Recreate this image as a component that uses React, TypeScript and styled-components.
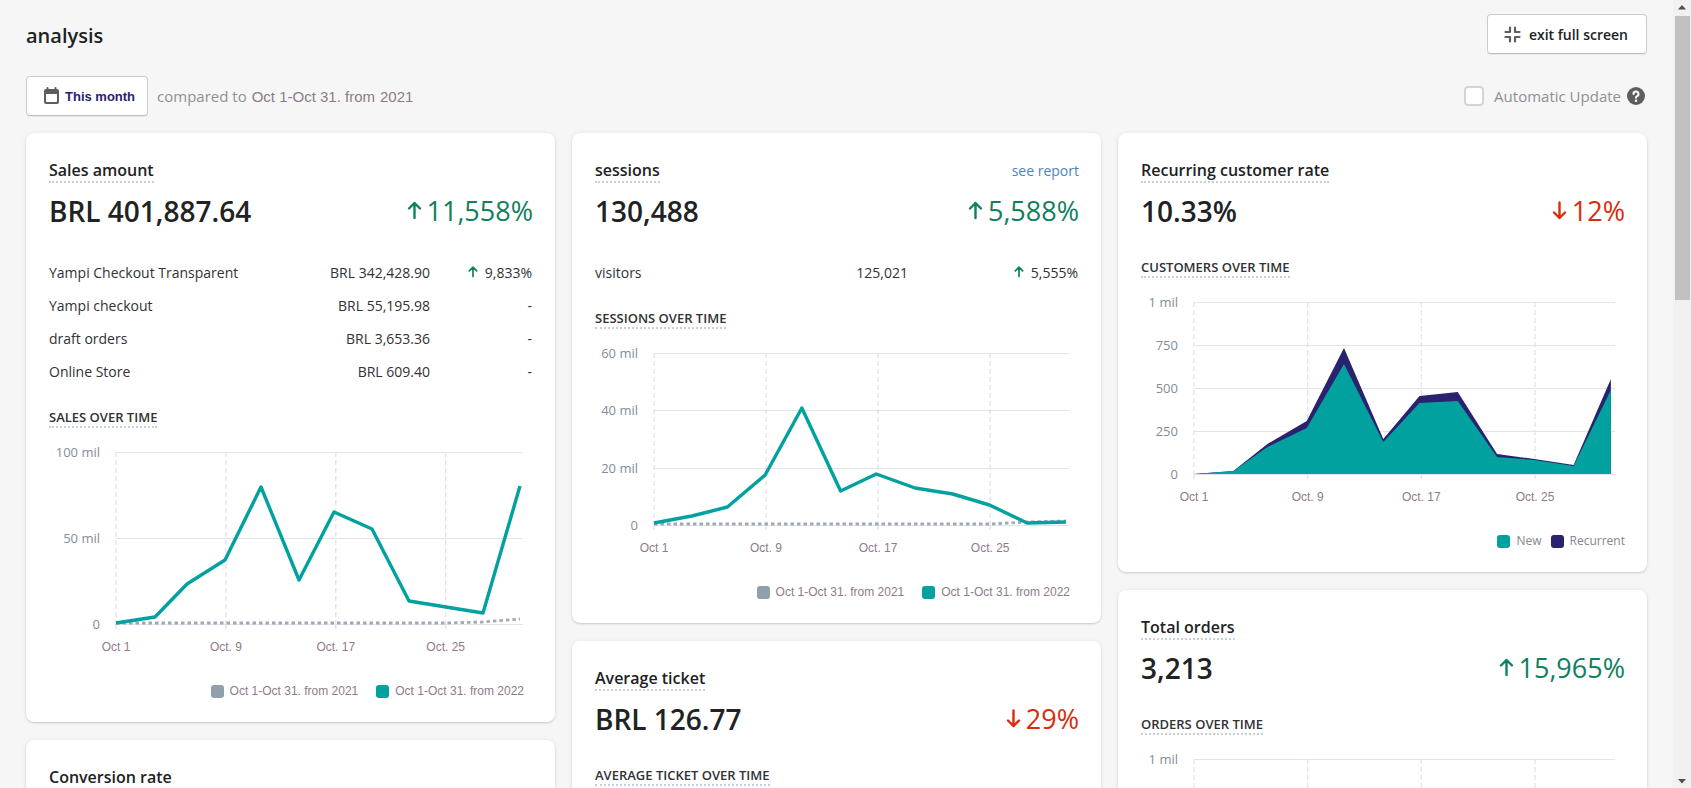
import React from "react";
import styled, { createGlobalStyle } from "styled-components";

const sans = `"Open Sans", "Noto Sans", sans-serif`;
const arial = `"Liberation Sans", Arial, sans-serif`;

const color = {
  page: "#f6f6f7",
  text: "#202223",
  muted: "#8c9196",
  axis: "#7f8d99",
  mauve: "#8f7a8a",
  grid: "#e1e4ea",
  teal: "#00a19f",
  slate: "#919eab",
  navy: "#29226f",
  up: "#108060",
  down: "#d82c0d",
  icon: "#5c5f62",
};

const GlobalStyle = createGlobalStyle`
  *, *::before, *::after { box-sizing: border-box; }
  body {
    margin: 0;
    background: ${color.page};
    color: ${color.text};
    font-family: ${sans};
    font-size: 15px;
  }
`;

/* ---------- page frame ---------- */

const Shell = styled.div`
  display: flex;
  height: 100vh;
`;

const Main = styled.main`
  flex: 1;
  min-width: 0;
  padding: 14px 26px 26px;
  overflow-y: auto;
  scrollbar-width: none;
`;

const ScrollTrack = styled.div`
  display: flex;
  flex-direction: column;
  align-items: center;
  width: 18px;
  background: #f1f1f1;
`;

const ScrollThumb = styled.div`
  flex: 0 0 36%;
  width: 15px;
  background: #c1c1c1;
`;

const ScrollArrow = styled.svg`
  display: block;
  flex: none;
  width: 18px;
  height: 16px;
  fill: #505050;
`;

const ScrollFill = styled.div`
  flex: 1;
`;

const TopBar = styled.header`
  display: flex;
  align-items: center;
  justify-content: space-between;
  height: 40px;
`;

const PageTitle = styled.h1`
  margin: 0;
  padding-top: 4px;
  font-size: 20px;
  line-height: 28px;
  font-weight: 600;
`;

const OutlineButton = styled.button<{ $navy?: boolean }>`
  display: inline-flex;
  align-items: center;
  gap: ${(p) => (p.$navy ? 5 : 8)}px;
  height: 40px;
  padding: 0 ${(p) => (p.$navy ? 12 : 18)}px 0 16px;
  border: 1px solid #c9cccf;
  border-bottom-color: #babfc3;
  border-radius: 4px;
  background: #fff;
  box-shadow: 0 1px 0 rgba(0, 0, 0, 0.05);
  color: ${(p) => (p.$navy ? color.navy : color.text)};
  font-family: ${(p) => (p.$navy ? arial : sans)};
  font-size: ${(p) => (p.$navy ? 13 : 14)}px;
  font-weight: ${(p) => (p.$navy ? 700 : 600)};
  white-space: nowrap;
`;

const FilterBar = styled.div`
  display: flex;
  align-items: center;
  justify-content: space-between;
  margin-top: 22px;
  margin-bottom: 17px;
`;

const FilterGroup = styled.div<{ $gap: number }>`
  display: flex;
  align-items: center;
  gap: ${(p) => p.$gap}px;
`;

const Comparison = styled.div`
  display: flex;
  align-items: baseline;
  gap: 5px;
  color: ${color.muted};
  font-size: 15px;
`;

const DateText = styled.span`
  color: ${color.mauve};
  font-family: ${arial};
  font-size: 15px;
`;

const CheckLabel = styled.label`
  display: flex;
  align-items: center;
  gap: 10px;
  color: ${color.muted};
  font-size: 15px;
`;

const CheckBox = styled.input`
  appearance: none;
  width: 20px;
  height: 20px;
  margin: 0;
  border: 2px solid #d2d5d8;
  border-radius: 4px;
  background: #fff;
`;

const HelpButton = styled.button`
  display: flex;
  padding: 0;
  margin-right: 2px;
  border: 0;
  background: none;
`;

/* ---------- cards ---------- */

const Columns = styled.div`
  display: grid;
  grid-template-columns: repeat(3, minmax(0, 1fr));
  gap: 17px;
  align-items: start;
`;

const Column = styled.div`
  display: flex;
  flex-direction: column;
  gap: 18px;
`;

const CardBox = styled.section`
  padding: 26px 22px 21px 23px;
  border-radius: 8px;
  background: #fff;
  box-shadow: 0 0 5px rgba(23, 24, 24, 0.06), 0 1px 2px rgba(0, 0, 0, 0.16);
`;

const CardHeader = styled.div`
  display: flex;
  justify-content: space-between;
  align-items: flex-start;
`;

const CardTitle = styled.h2`
  margin: 0;
  border-bottom: 2px dotted #c9cfd8;
  font-size: 16px;
  line-height: 22px;
  font-weight: 600;
`;

const ReportLink = styled.a`
  color: #4a86bd;
  font-size: 14px;
  line-height: 24px;
  text-decoration: none;
`;

const Summary = styled.div`
  display: flex;
  justify-content: space-between;
  align-items: center;
  margin-top: 8px;
  line-height: 40px;
`;

const Amount = styled.span`
  font-size: 28px;
  font-weight: 600;
`;

const Delta = styled.span<{ $down?: boolean }>`
  display: flex;
  align-items: center;
  gap: 5px;
  font-size: 27px;
  color: ${(p) => (p.$down ? color.down : color.up)};
`;

const Breakdown = styled.table`
  width: 100%;
  margin-top: 25px;
  margin-bottom: -7px;
  border-collapse: collapse;
  font-size: 14px;
  color: #303234;
`;

const RowName = styled.th`
  height: 33px;
  padding: 0;
  text-align: left;
  font-weight: 400;
`;

const RowValue = styled.td`
  padding: 0;
  text-align: right;
`;

const RowDelta = styled.td<{ $width: number }>`
  width: ${(p) => p.$width}px;
  padding: 0 1px 0 0;
  text-align: right;
`;

const SmallArrow = styled.svg`
  width: 10px;
  height: 12px;
  margin-right: 7px;
  color: ${color.up};
`;

const SubTitle = styled.h3`
  width: fit-content;
  margin: 27px 0 0;
  border-bottom: 2px dotted #c9cfd8;
  font-size: 13px;
  line-height: 18px;
  font-weight: 600;
  text-transform: uppercase;
  color: #303234;
`;

/* ---------- charts ---------- */

const ChartBox = styled.div<{ $axis: number }>`
  display: grid;
  grid-template-columns: ${(p) => p.$axis}px minmax(0, 1fr);
  column-gap: 16px;
  margin-top: 24px;
  padding-right: 10px;
`;

const YLabels = styled.div`
  display: flex;
  flex-direction: column;
  justify-content: space-between;
  height: 192px;
  margin-top: -10px;
  color: ${color.axis};
  font-size: 13px;
  line-height: 20px;
  text-align: right;
  white-space: nowrap;
`;

const PlotSvg = styled.svg`
  display: block;
  width: 100%;
  height: 229px;
  overflow: visible;
`;

const XLabel = styled.text`
  fill: ${color.mauve};
  font-family: ${arial};
  font-size: 12px;
  text-anchor: middle;
`;

const LegendRow = styled.div<{ $wide?: boolean }>`
  display: flex;
  justify-content: flex-end;
  gap: ${(p) => (p.$wide ? 18 : 9)}px;
  padding-right: ${(p) => (p.$wide ? 9 : 0)}px;
  color: ${(p) => (p.$wide ? color.mauve : "#7f8690")};
  font-family: ${(p) => (p.$wide ? arial : sans)};
  font-size: 12px;
  line-height: 20px;
`;

const LegendItem = styled.span`
  display: flex;
  align-items: center;
  gap: 6px;
`;

const Swatch = styled.span<{ $fill: string }>`
  width: 13px;
  height: 13px;
  border-radius: 3px;
  background: ${(p) => p.$fill};
`;

type Point = [number, number];

const PLOT_W = 407;
const PLOT_H = 172;
const toPoints = (pts: Point[]) => pts.map((p) => p.join(",")).join(" ");
const areaPoints = (pts: Point[]) =>
  `0,${PLOT_H} ${toPoints(pts)} ${pts[pts.length - 1][0]},${PLOT_H}`;

const xTicks = [
  { label: "Oct 1", at: "0%" },
  { label: "Oct. 9", at: "27%" },
  { label: "Oct. 17", at: "54%" },
  { label: "Oct. 25", at: "81%" },
];

interface ChartProps {
  yLabels: string[];
  axis: number;
  current?: Point[];
  previous?: Point[];
  areas?: { fill: string; points: Point[] }[];
}

function Chart({ yLabels, axis, current, previous, areas }: ChartProps) {
  const steps = yLabels.length - 1;
  return (
    <ChartBox $axis={axis}>
      <YLabels>
        {yLabels.map((l) => (
          <span key={l}>{l}</span>
        ))}
      </YLabels>
      <PlotSvg role="img" aria-label="Chart">
        {yLabels.map((l, i) => {
          const y = Math.round((PLOT_H / steps) * i);
          return <rect key={l} x="0" y={y} width="100%" height="1" fill={color.grid} />;
        })}
        {xTicks.map((t) => (
          <React.Fragment key={t.label}>
            <line x1={t.at} x2={t.at} y1="0" y2={PLOT_H} stroke={color.grid} strokeWidth="1.3" strokeDasharray="5 3" />
            <line x1={t.at} x2={t.at} y1={PLOT_H} y2={PLOT_H + 5} stroke={color.grid} strokeWidth="1.5" />
            <XLabel x={t.at} y={PLOT_H + 27}>
              {t.label}
            </XLabel>
          </React.Fragment>
        ))}
        <svg
          width="100%"
          height={PLOT_H}
          viewBox={`0 0 ${PLOT_W} ${PLOT_H}`}
          preserveAspectRatio="none"
          overflow="visible"
        >
          {areas?.map((a) => (
            <polygon key={a.fill} points={areaPoints(a.points)} fill={a.fill} />
          ))}
          {previous && (
            <polyline
              points={toPoints(previous)}
              fill="none"
              stroke="#a0a9b8"
              strokeWidth="2.8"
              strokeDasharray="3.500 3"
              vectorEffect="non-scaling-stroke"
            />
          )}
          {current && (
            <polyline
              points={toPoints(current)}
              fill="none"
              stroke={color.teal}
              strokeWidth="3.400"
              strokeLinejoin="round"
              vectorEffect="non-scaling-stroke"
            />
          )}
        </svg>
      </PlotSvg>
    </ChartBox>
  );
}

function PeriodLegend() {
  return (
    <LegendRow $wide>
      <LegendItem>
        <Swatch $fill={color.slate} />
        Oct 1-Oct 31. from 2021
      </LegendItem>
      <LegendItem>
        <Swatch $fill={color.teal} />
        Oct 1-Oct 31. from 2022
      </LegendItem>
    </LegendRow>
  );
}

function DeltaArrow({ down }: { down?: boolean }) {
  return (
    <svg width="15" height="20" viewBox="0 0 15 20" fill="none" stroke="currentColor" strokeWidth="2.4" strokeLinecap="round" strokeLinejoin="round" aria-hidden="true">
      <path d={down ? "M7.500 1.500V17M2 11.500l5.500 5.500 5.500-5.500" : "M7.500 17V2M2 7.500l5.500-5.500 5.500 5.500"} />
    </svg>
  );
}

interface MetricCardProps {
  title: string;
  amount: string;
  delta: string;
  down?: boolean;
  report?: boolean;
  rows?: [string, string, string][];
  deltaWidth?: number;
  subtitle: string;
  children?: React.ReactNode;
}

function MetricCard({ title, amount, delta, down, report, rows, deltaWidth = 103, subtitle, children }: MetricCardProps) {
  return (
    <CardBox>
      <CardHeader>
        <CardTitle>{title}</CardTitle>
        {report && <ReportLink href="#report">see report</ReportLink>}
      </CardHeader>
      <Summary>
        <Amount>{amount}</Amount>
        <Delta $down={down}>
          <DeltaArrow down={down} />
          {delta}
        </Delta>
      </Summary>
      {rows && (
        <Breakdown>
          <tbody>
            {rows.map(([name, value, change]) => (
              <tr key={name}>
                <RowName scope="row">{name}</RowName>
                <RowValue>{value}</RowValue>
                <RowDelta $width={deltaWidth}>
                  {change !== "-" && (
                    <SmallArrow viewBox="0 0 10 12" fill="none" stroke="currentColor" strokeWidth="1.700" strokeLinecap="round" strokeLinejoin="round" aria-hidden="true">
                      <path d="M5 10.500V1.200M1.300 4.800L5 1.200l3.700 3.600" />
                    </SmallArrow>
                  )}
                  {change}
                </RowDelta>
              </tr>
            ))}
          </tbody>
        </Breakdown>
      )}
      <SubTitle>{subtitle}</SubTitle>
      {children}
    </CardBox>
  );
}

/* ---------- chart data, in plot units ---------- */

const salesNow: Point[] = [[0, 171], [39, 165], [71, 132], [109, 108], [145, 35], [183, 128], [218, 60], [256, 77], [293, 149], [330, 155], [367, 161], [404, 34]];
const salesBefore: Point[] = [[0, 171], [330, 171], [367, 170], [404, 167]];
const sessionsNow: Point[] = [[0, 170], [37, 163], [72, 154], [109, 122], [145, 55], [183, 138], [218, 121], [256, 135], [293, 141], [329, 152], [366, 170], [404, 169]];
const sessionsBefore: Point[] = [[0, 171], [329, 171], [366, 169], [404, 168]];
const newCustomers: Point[] = [[0, 172], [38, 169], [71, 145], [109, 126], [145, 62], [183, 140], [218, 101], [255, 99], [293, 155], [329, 158], [367, 164], [403, 88]];
const allCustomers: Point[] = [[0, 172], [38, 169], [71, 142], [109, 119], [145, 46], [183, 137], [218, 94], [255, 90], [293, 152], [329, 157], [367, 163], [403, 77]];

export default function App() {
  return (
    <>
      <GlobalStyle />
      <Shell>
        <Main>
          <TopBar>
            <PageTitle>analysis</PageTitle>
            <OutlineButton type="button">
              <svg width="17" height="17" viewBox="0 0 17 17" fill="none" stroke={color.icon} strokeWidth="2.200" strokeLinecap="round" strokeLinejoin="round" aria-hidden="true">
                <path d="M1.500 6H6V1.500M11 1.500V6h4.500M1.500 11H6v4.500M11 15.500V11h4.500" />
              </svg>
              exit full screen
            </OutlineButton>
          </TopBar>
          <FilterBar>
            <FilterGroup $gap={9}>
              <OutlineButton type="button" $navy>
                <svg width="17" height="18" viewBox="0 0 17 18" aria-hidden="true">
                  <path
                    fill={color.icon}
                    fillRule="evenodd"
                    d="M4.500 0a1 1 0 0 1 1 1v1h6V1a1 1 0 1 1 2 0v1H14a2 2 0 0 1 2 2v11a2 2 0 0 1-2 2H3a2 2 0 0 1-2-2V4a2 2 0 0 1 2-2h.5V1a1 1 0 0 1 1-1zM3 7v7a1 1 0 0 0 1 1h9a1 1 0 0 0 1-1V7z"
                  />
                </svg>
                This month
              </OutlineButton>
              <Comparison>
                compared to <DateText>Oct 1-Oct 31. from</DateText> <DateText>2021</DateText>
              </Comparison>
            </FilterGroup>
            <FilterGroup $gap={6}>
              <CheckLabel>
                <CheckBox type="checkbox" />
                Automatic Update
              </CheckLabel>
              <HelpButton type="button" aria-label="Help">
                <svg width="18" height="18" viewBox="0 0 18 18" aria-hidden="true">
                  <circle cx="9" cy="9" r="9" fill={color.icon} />
                  <path d="M6.500 7a2.500 2.500 0 1 1 3.700 2.200c-.8.400-1.200.8-1.200 1.500" fill="none" stroke="#fff" strokeWidth="2" strokeLinecap="round" />
                  <circle cx="9" cy="13.700" r="1.200" fill="#fff" />
                </svg>
              </HelpButton>
            </FilterGroup>
          </FilterBar>
          <Columns>
            <Column>
              <MetricCard
                title="Sales amount"
                amount="BRL 401,887.64"
                delta="11,558%"
                subtitle="Sales over time"
                rows={[
                  ["Yampi Checkout Transparent", "BRL 342,428.90", "9,833%"],
                  ["Yampi checkout", "BRL 55,195.98", "-"],
                  ["draft orders", "BRL 3,653.36", "-"],
                  ["Online Store", "BRL 609.40", "-"],
                ]}
              >
                <Chart axis={51} yLabels={["100 mil", "50 mil", "0"]} current={salesNow} previous={salesBefore} />
                <PeriodLegend />
              </MetricCard>
              <CardBox>
                <CardHeader>
                  <CardTitle>Conversion rate</CardTitle>
                </CardHeader>
              </CardBox>
            </Column>
            <Column>
              <MetricCard
                title="sessions"
                amount="130,488"
                delta="5,588%"
                report
                subtitle="Sessions over time"
                deltaWidth={171}
                rows={[["visitors", "125,021", "5,555%"]]}
              >
                <Chart axis={43} yLabels={["60 mil", "40 mil", "20 mil", "0"]} current={sessionsNow} previous={sessionsBefore} />
                <PeriodLegend />
              </MetricCard>
              <MetricCard title="Average ticket" amount="BRL 126.77" delta="29%" down subtitle="Average ticket over time" />
            </Column>
            <Column>
              <MetricCard title="Recurring customer rate" amount="10.33%" delta="12%" down subtitle="Customers over time">
                <Chart
                  axis={37}
                  yLabels={["1 mil", "750", "500", "250", "0"]}
                  areas={[
                    { fill: color.navy, points: allCustomers },
                    { fill: color.teal, points: newCustomers },
                  ]}
                />
                <LegendRow>
                  <LegendItem>
                    <Swatch $fill={color.teal} />
                    New
                  </LegendItem>
                  <LegendItem>
                    <Swatch $fill={color.navy} />
                    Recurrent
                  </LegendItem>
                </LegendRow>
              </MetricCard>
              <MetricCard title="Total orders" amount="3,213" delta="15,965%" subtitle="Orders over time">
                <Chart axis={37} yLabels={["1 mil", "500", "0"]} />
              </MetricCard>
            </Column>
          </Columns>
        </Main>
        <ScrollTrack aria-hidden="true">
          <ScrollArrow viewBox="0 0 18 16">
            <path d="M5 9.500h8L9 5z" />
          </ScrollArrow>
          <ScrollThumb />
          <ScrollFill />
          <ScrollArrow viewBox="0 0 18 16">
            <path d="M5 7h8L9 11.500z" />
          </ScrollArrow>
        </ScrollTrack>
      </Shell>
    </>
  );
}
